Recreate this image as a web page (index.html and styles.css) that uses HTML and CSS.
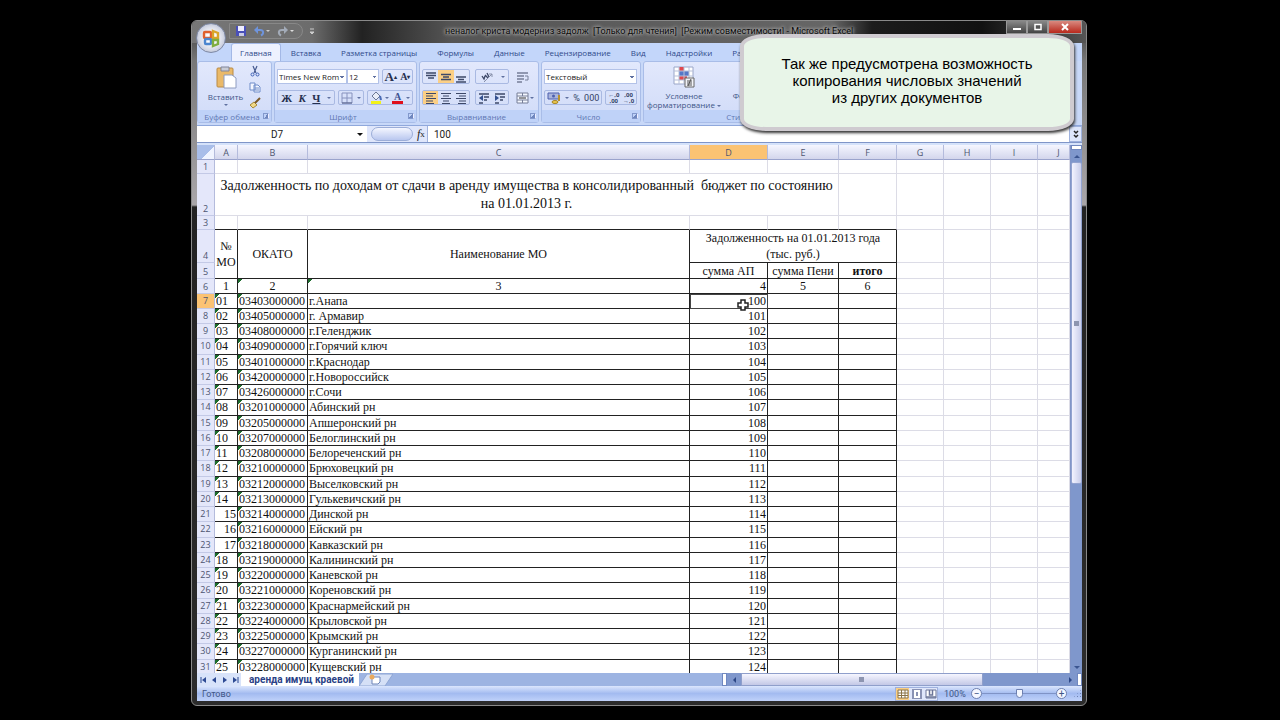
FILE: index.html
```html
<!DOCTYPE html>
<html lang="ru">
  <head>
    <meta charset="UTF-8" />
    <title>Microsoft Excel</title>
    <meta name="viewport" content="width=device-width, initial-scale=1.0" />
    <link rel="stylesheet" href="styles.css">
  </head>
  <body>
    <div class="window">
      <header class="titlebar">
        <button class="orb" aria-label="Office">
          <svg viewBox="0 0 28 28" width="28" height="28">
            <g fill="none" stroke-width="2.4">
              <rect x="7" y="8" width="7" height="6" rx="1" stroke="#e0602c" />
              <path d="M16 7l5 2v5h-5z" stroke="#d9a52a" />
              <rect x="8" y="15" width="6" height="5" rx="1" stroke="#4c86cf" />
              <path d="M16 16h5v4l-5 2z" stroke="#7fae3e" />
            </g>
          </svg>
        </button>
        <div class="quick">
          <button aria-label="Сохранить">
            <svg viewBox="0 0 12 12" width="12" height="12"><path d="M1 1h10v10H1z" fill="#4a50b8" /><path d="M3 1h6v5H3z" fill="#eef" /><path d="M4 8h5v3H4z" fill="#c9cbe8" /></svg>
          </button>
          <button aria-label="Отменить">
            <svg viewBox="0 0 16 12" width="16" height="12"><path d="M3 5h3c4 0 4 4 1 5.500" fill="none" stroke="#6f94dc" stroke-width="2" /><path d="M0 5l4-4v8z" fill="#6f94dc" /><path d="M12 5h4l-2 2z" fill="#ccc" /></svg>
          </button>
          <button aria-label="Вернуть">
            <svg viewBox="0 0 18 12" width="18" height="12"><path d="M8 5H5C1 5 1 9 4 10.500" fill="none" stroke="#a3abb8" stroke-width="2" /><path d="M11 5L7 1v8z" fill="#a3abb8" /><path d="M13 5h4l-2 2z" fill="#ddd" /></svg>
          </button>
        </div>
        <button class="quick-more" aria-label="Настройка панели">
          <svg viewBox="0 0 6 8" width="6" height="8"><path d="M1 1h4M1 4h4L3 6z" stroke="#ccc" fill="#ccc" /></svg>
        </button>
        <div class="caption">неналог криста модерниз задолж&nbsp; [Только для чтения]&nbsp; [Режим совместимости] - Microsoft Excel</div>
        <div class="controls">
          <button aria-label="Свернуть"><svg viewBox="0 0 10 8" width="10" height="8"><path d="M1 5h8v2H1z" fill="#fff" /></svg></button>
          <button aria-label="Развернуть"><svg viewBox="0 0 10 8" width="10" height="8"><path d="M2 1.500h6v5H2z" fill="#555" stroke="#fff" stroke-width="1.500" /></svg></button>
          <button class="close" aria-label="Закрыть"><svg viewBox="0 0 10 8" width="10" height="8"><path d="M2 1l6 6M8 1L2 7" stroke="#fff" stroke-width="2" /></svg></button>
        </div>
      </header>

      <nav class="tabs">
        <button class="active">Главная</button>
        <button>Вставка</button>
        <button>Разметка страницы</button>
        <button>Формулы</button>
        <button>Данные</button>
        <button>Рецензирование</button>
        <button>Вид</button>
        <button>Надстройки</button>
        <button>Разработчик</button>
      </nav>

      <div class="ribbon">
        <section class="group clipboard">
          <div class="group-body">
            <button class="big">
              <svg viewBox="0 0 22 24" width="22" height="24"><rect x="2" y="3" width="16" height="19" rx="1" fill="#eab968" stroke="#b98a45" /><path d="M6 2h8v4H6z" fill="#c9ccd6" stroke="#80859a" /><path d="M9 10h8l4 3v10H9z" fill="#fff" stroke="#8e9cc0" /></svg>
              <span>Вставить</span>
              <i class="arrow"></i>
            </button>
            <div class="stack">
              <button aria-label="Вырезать"><svg viewBox="0 0 12 12" width="12" height="12"><path d="M4 1l3 7M8 1L5 8" stroke="#45598f" stroke-width="1.200" /><circle cx="3.500" cy="9.500" r="1.500" fill="none" stroke="#3f62b8" /><circle cx="8.500" cy="9.500" r="1.500" fill="none" stroke="#3f62b8" /></svg></button>
              <button aria-label="Копировать"><svg viewBox="0 0 12 12" width="12" height="12"><path d="M1 2h5v7H1zM5 4h4l2 2v5H5z" fill="#f4f7ff" stroke="#6e8cc9" /><path d="M6 7h4M6 9h4" stroke="#6e8cc9" /></svg></button>
              <button aria-label="Формат по образцу"><svg viewBox="0 0 12 12" width="12" height="12"><path d="M1 8l4-3 3 3-4 3z" fill="#f0d98a" stroke="#a98a35" /><path d="M6 6l5-5" stroke="#7b5a2a" stroke-width="2" /></svg></button>
            </div>
          </div>
          <h2>Буфер обмена<i class="launcher"></i></h2>
        </section>

        <section class="group font">
          <div class="group-body rows">
            <div class="line">
              <div class="combo">
                <select class="face" aria-label="Шрифт"><option>Times New Rom</option></select>
                <select class="size" aria-label="Размер"><option>12</option></select>
              </div>
              <div class="set grow">
                <button class="serif">A<sup>▴</sup></button>
                <button class="serif small">A<sup>▾</sup></button>
              </div>
            </div>
            <div class="line">
              <div class="set style">
                <button class="serif"><b>Ж</b></button>
                <button class="serif"><b><em>К</em></b></button>
                <button class="serif"><b><u>Ч</u></b></button>
                <i class="arrow"></i>
              </div>
              <div class="set">
                <button aria-label="Границы"><svg viewBox="0 0 12 12" width="12" height="12"><path d="M1 1h10v10H1zM6 1v10M1 6h10" fill="none" stroke="#8792bd" /><path d="M1 11h10" stroke="#555f88" /></svg></button>
                <i class="arrow"></i>
              </div>
              <div class="set grow">
                <button aria-label="Цвет заливки"><svg viewBox="0 0 12 14" width="12" height="14"><path d="M2 5l4-4 4 4-4 4z" fill="#e8edf8" stroke="#6b7896" /><path d="M10 5l1 4" stroke="#4a6bb5" stroke-width="2" /><path d="M1 10h10v3H1z" fill="#f2f21a" /></svg></button>
                <i class="arrow"></i>
                <button class="color-a"><span>A</span></button>
                <i class="arrow"></i>
              </div>
            </div>
          </div>
          <h2>Шрифт<i class="launcher"></i></h2>
        </section>

        <section class="group align">
          <div class="group-body rows">
            <div class="line">
              <div class="set three">
                <button aria-label="По верхнему краю"><svg viewBox="0 0 12 12" width="12" height="12"><path d="M1 2h10M1 4.500h10M3 7h6" stroke="#3d4868" stroke-width="1.300" /></svg></button>
                <button class="on" aria-label="По середине"><svg viewBox="0 0 12 12" width="12" height="12"><path d="M1 3.500h10M3 6h6M1 8.500h10" stroke="#3d4868" stroke-width="1.300" /></svg></button>
                <button aria-label="По нижнему краю"><svg viewBox="0 0 12 12" width="12" height="12"><path d="M1 6h10M3 8.500h6M1 11h10" stroke="#3d4868" stroke-width="1.300" /></svg></button>
              </div>
              <div class="set indent">
                <button aria-label="Ориентация"><svg viewBox="0 0 14 12" width="14" height="12"><path d="M2 5l2 3 1-3M5 4l3 3M7 2l2 4" fill="none" stroke="#3d4868" stroke-width="1.300" /><path d="M4 11l8-8M12 6V3H9" fill="none" stroke="#8790aa" /></svg></button>
                <i class="arrow"></i>
              </div>
              <button class="plain" aria-label="Перенос текста"><svg viewBox="0 0 14 12" width="14" height="12"><path d="M1 2h11M1 5h7M1 8h7M1 11h5" stroke="#767e98" stroke-width="1.300" /><path d="M9 5h3v4H9" fill="none" stroke="#767e98" /></svg></button>
            </div>
            <div class="line">
              <div class="set three">
                <button class="on" aria-label="По левому краю"><svg viewBox="0 0 12 12" width="12" height="12"><path d="M1 1.500h10M1 4h7M1 6.500h10M1 9h7M1 11.500h8" stroke="#3d4868" stroke-width="1.200" /></svg></button>
                <button aria-label="По центру"><svg viewBox="0 0 12 12" width="12" height="12"><path d="M1 1.500h10M3 4h6M1 6.500h10M3 9h6M2 11.500h8" stroke="#3d4868" stroke-width="1.200" /></svg></button>
                <button aria-label="По правому краю"><svg viewBox="0 0 12 12" width="12" height="12"><path d="M1 1.500h10M4 4h7M1 6.500h10M4 9h7M3 11.500h8" stroke="#3d4868" stroke-width="1.200" /></svg></button>
              </div>
              <div class="set indent">
                <button aria-label="Уменьшить отступ"><svg viewBox="0 0 12 12" width="12" height="12"><path d="M1 2h10M6 5h5M6 8h3M1 11h4" stroke="#3d4868" stroke-width="1.500" /><path d="M5 3v6L1 6z" fill="#33508f" /></svg></button>
                <button aria-label="Увеличить отступ"><svg viewBox="0 0 12 12" width="12" height="12"><path d="M1 2h10M6 5h5M6 8h3M1 11h4" stroke="#3d4868" stroke-width="1.500" /><path d="M1 3v6l4-3z" fill="#33508f" /></svg></button>
              </div>
              <button class="plain" aria-label="Объединить"><svg viewBox="0 0 18 12" width="18" height="12"><path d="M1 1h11v10H1zM1 4h11M1 8h11M6.500 1v3M6.500 8v3" fill="#f4f7ff" stroke="#767e98" /><path d="M3 6h7" stroke="#333" /><path d="M14 5h4l-2 2z" fill="#5f70a0" /></svg></button>
            </div>
          </div>
          <h2>Выравнивание<i class="launcher"></i></h2>
        </section>

        <section class="group number">
          <div class="group-body rows">
            <div class="line">
              <select class="format" aria-label="Числовой формат"><option>Текстовый</option></select>
            </div>
            <div class="line">
              <div class="set money">
                <button aria-label="Денежный формат"><svg viewBox="0 0 14 12" width="14" height="12"><path d="M1 1h11v6H1z" fill="#a9b4dc" stroke="#4c5fae" /><circle cx="6.500" cy="4" r="1.500" fill="#4c5fae" /><ellipse cx="8" cy="10" rx="3" ry="1.500" fill="#ecc94e" stroke="#a58324" /><path d="M12 3v6" stroke="#b8922e" stroke-width="2" /></svg></button>
                <i class="arrow"></i>
                <button>%</button>
                <button>000</button>
              </div>
              <div class="set decimals">
                <button>←,0<br>,00</button>
                <button>,00<br>→,0</button>
              </div>
            </div>
          </div>
          <h2>Число<i class="launcher"></i></h2>
        </section>

        <section class="group styles">
          <div class="group-body">
            <button class="big">
              <svg viewBox="0 0 22 24" width="22" height="24"><path d="M1 2h19v17H1z" fill="#fff" stroke="#9aa6c8" /><path d="M6 2h5v4H6zM6 11h5v4H6z" fill="#e0474c" /><path d="M6 6h10v5H6z" fill="#5577c8" /><path d="M11 11h3v4h-3z" fill="#e0474c" /><path d="M1 6h19M1 11h19M1 15h19M6 2v17M11 2v17M16 2v17" stroke="#b6bfd9" /><path d="M12 13h9v9h-9z" fill="#f2f3f8" stroke="#666" /><path d="M14 16h5M14 18h5M14 20h5M18 14l-3 7" stroke="#555" /></svg>
              <span>Условное<br>форматирование <i class="arrow"></i></span>
            </button>
            <button class="big">
              <svg viewBox="0 0 22 24" width="22" height="24"><path d="M1 2h19v17H1zM1 8h19M1 13h19M7 2v17M14 2v17" fill="#dfe8fb" stroke="#6f8cc8" /></svg>
              <span>Форматировать<br>как таблицу</span>
            </button>
          </div>
          <h2>Стили</h2>
        </section>
      </div>

      <div class="formula">
        <div class="namebox">
          <input type="text" value="D7" aria-label="Имя ячейки" />
          <i class="arrow"></i>
        </div>
        <div class="fx"><span class="pill"></span><button><em>f</em>x</button></div>
        <input class="value" type="text" value="100" aria-label="Строка формул" />
        <button class="expand" aria-label="Развернуть строку формул"><svg viewBox="0 0 8 10" width="8" height="10"><path d="M2 2l2 2 2-2M2 6l2 2 2-2" fill="none" stroke="#222" stroke-width="1.500" /></svg></button>
      </div>

      <main class="work">
        <div class="sheet">
          <table>
            <colgroup>
              <col class="c-num"><col class="c-a"><col class="c-b"><col class="c-c"><col class="c-d"><col class="c-e"><col class="c-f"><col class="c-g"><col class="c-g"><col class="c-g"><col>
            </colgroup>
            <thead>
              <tr>
                <th class="corner"></th><th>A</th><th>B</th><th>C</th><th class="current">D</th><th>E</th><th>F</th><th>G</th><th>H</th><th>I</th><th class="last">J</th>
              </tr>
            </thead>
            <tbody id="rows">
              <tr class="r1"><th>1</th><td></td><td></td><td></td><td></td><td></td><td></td><td></td><td></td><td></td><td></td></tr>
              <tr class="r2"><th>2</th><td colspan="5" class="title">Задолженность по доходам от сдачи в аренду имущества в консолидированный&nbsp; бюджет по состоянию<br>на 01.01.2013 г.</td><td></td><td></td><td></td><td></td><td></td></tr>
              <tr class="r3"><th>3</th><td class="under"></td><td class="under"></td><td class="under"></td><td class="under"></td><td class="under"></td><td class="under"></td><td></td><td></td><td></td><td></td></tr>
              <tr class="r4"><th>4</th><td rowspan="2" class="box mid tall">№ МО</td><td rowspan="2" class="box mid">ОКАТО</td><td rowspan="2" class="box mid">Наименование МО</td><td colspan="3" class="box mid tall">Задолженность на 01.01.2013 года<br>(тыс. руб.)</td><td></td><td></td><td></td><td></td></tr>
              <tr class="r5"><th>5</th><td class="box mid">сумма АП</td><td class="box mid">сумма Пени</td><td class="box mid"><b>итого</b></td><td></td><td></td><td></td><td></td></tr>
              <tr><th>6</th><td class="box mid">1</td><td class="box mid mark">2</td><td class="box mid mark">3</td><td class="box num">4</td><td class="box mid">5</td><td class="box mid">6</td><td></td><td></td><td></td><td></td></tr>
            </tbody>
          </table>
        </div>
        <div class="vscroll">
          <span class="split"></span>
          <button class="up" aria-label="Вверх"></button>
          <span class="thumb"></span>
          <button class="down" aria-label="Вниз"></button>
        </div>
      </main>

      <div class="bottom">
        <div class="sheet-tabs">
          <button aria-label="Первый лист"><svg viewBox="0 0 8 8" width="8" height="8"><path d="M2 1v6" stroke="#2d4a94" /><path d="M7 1v6L3 4z" fill="#2d4a94" /></svg></button>
          <button aria-label="Предыдущий лист"><svg viewBox="0 0 8 8" width="8" height="8"><path d="M6 1v6L2 4z" fill="#2d4a94" /></svg></button>
          <button aria-label="Следующий лист"><svg viewBox="0 0 8 8" width="8" height="8"><path d="M2 1v6l4-3z" fill="#2d4a94" /></svg></button>
          <button aria-label="Последний лист"><svg viewBox="0 0 8 8" width="8" height="8"><path d="M1 1v6l4-3z" fill="#2d4a94" /><path d="M6 1v6" stroke="#2d4a94" /></svg></button>
          <button class="name">аренда имущ краевой</button>
          <button class="new" aria-label="Вставить лист"><svg viewBox="0 0 34 13" width="34" height="13"><path d="M0 13L8 1h26l-8 12z" fill="#d5e0f6" stroke="#8ea6d4" /><path d="M13 4h8v5l-2 2h-6z" fill="#fff" stroke="#6c84b8" /><circle cx="13" cy="4" r="2.500" fill="#e9a95c" /></svg></button>
        </div>
        <div class="hscroll">
          <span class="grip"></span>
          <button class="left" aria-label="Влево"></button>
          <span class="track"><span class="thumb"></span></span>
          <button class="right" aria-label="Вправо"></button>
          <span class="grip"></span>
        </div>
      </div>

      <footer class="status">
        <span class="ready">Готово</span>
        <div class="views">
          <button class="on" aria-label="Обычный"><svg viewBox="0 0 12 10" width="12" height="10"><path d="M1 1h10v8H1zM1 4h10M1 6.500h10M4.500 1v8M8 1v8" fill="#fff" stroke="#8a7448" /></svg></button>
          <button aria-label="Разметка страницы"><svg viewBox="0 0 12 10" width="12" height="10"><path d="M1 0h10v10H1z" fill="#8992b4" /><path d="M3 1h6v8H3z" fill="#fff" /><path d="M5 3h2v4H5z" fill="#8992b4" /></svg></button>
          <button aria-label="Страничный режим"><svg viewBox="0 0 12 10" width="12" height="10"><path d="M1 1h10v8H1z" fill="#fff" stroke="#6b7598" /><path d="M4.500 1v5h3V1M1 8h10" fill="none" stroke="#6b7598" stroke-width="1.500" /></svg></button>
        </div>
        <label for="zoom">100%</label>
        <button class="round" aria-label="Уменьшить">−</button>
        <input type="range" id="zoom" min="0" max="100" value="50" />
        <button class="round" aria-label="Увеличить">+</button>
        <span class="resize"></span>
      </footer>

      <aside class="note">Так же предусмотрена возможность<br>копирования числовых значений<br>из других документов</aside>
    </div>

    <script>
      const places = [
        ["01", "03403000000", "г.Анапа"],
        ["02", "03405000000", "г. Армавир"],
        ["03", "03408000000", "г.Геленджик"],
        ["04", "03409000000", "г.Горячий ключ"],
        ["05", "03401000000", "г.Краснодар"],
        ["06", "03420000000", "г.Новороссийск"],
        ["07", "03426000000", "г.Сочи"],
        ["08", "03201000000", "Абинский рн"],
        ["09", "03205000000", "Апшеронский рн"],
        ["10", "03207000000", "Белоглинский рн"],
        ["11", "03208000000", "Белореченский рн"],
        ["12", "03210000000", "Брюховецкий рн"],
        ["13", "03212000000", "Выселковский рн"],
        ["14", "03213000000", "Гулькевичский рн"],
        [15, "03214000000", "Динской рн"],
        [16, "03216000000", "Ейский рн"],
        [17, "03218000000", "Кавказский рн"],
        ["18", "03219000000", "Калининский рн"],
        ["19", "03220000000", "Каневской рн"],
        ["20", "03221000000", "Кореновский рн"],
        ["21", "03223000000", "Краснармейский рн"],
        ["22", "03224000000", "Крыловской рн"],
        ["23", "03225000000", "Крымский рн"],
        ["24", "03227000000", "Курганинский рн"],
        ["25", "03228000000", "Кущевский рн"],
      ];

      const cursor = `<svg class="cursor" viewBox="0 0 12 12" width="12" height="12">
        <path d="M4 1h4v3h3v4H8v3H4V8H1V4h3z" fill="#fff" stroke="#222" stroke-width="1.500" /></svg>`;

      let html = "";
      places.forEach(([no, code, name], i) => {
        // номера, введённые числом, прижаты вправо
        const kind = typeof no === "number" ? "num" : "mark";
        const first = i === 0;
        html += `<tr class="data">
          <th class="${first ? "current" : ""}">${i + 7}</th>
          <td class="box ${kind}">${no}</td>
          <td class="box mark">${code}</td>
          <td class="box">${name}</td>
          <td class="box num ${first ? "selected" : ""}">${first ? cursor : ""}${100 + i}</td>
          <td class="box"></td><td class="box"></td>
          <td></td><td></td><td></td><td></td></tr>`;
      });
      document.getElementById("rows").insertAdjacentHTML("beforeend", html);
    </script>
  </body>
</html>
```
FILE: styles.css
```css
* {
  box-sizing: border-box;
}

body {
  margin: 0;
  height: 100vh;
  padding: 20px 193px 14px 191px;
  background: #000;
  font-family: Roboto, "Noto Sans", sans-serif;
  font-size: 9px;
  color: #3f5687;
}

button,
input,
select {
  margin: 0;
  padding: 0;
  border: 0;
  background: none;
  font: inherit;
  color: inherit;
  appearance: none;
}

button {
  display: flex;
  align-items: center;
  justify-content: center;
  white-space: nowrap;
}

svg {
  display: block;
  flex: none;
}

.window {
  position: relative;
  display: flex;
  flex-direction: column;
  height: 100%;
  padding: 0 4px 4px 5px;
  border: 1px solid #8a8a8a;
  border-radius: 6px;
  background: linear-gradient(#3a3a3a, #777 40px, #a9a6a9 184px, #222 186px, #2c2c2c);
}

/* title bar */
.titlebar {
  display: flex;
  height: 22px;
  margin: 0 -4px 0 -5px;
  padding-left: 4px;
  border-radius: 5px 5px 0 0;
  background: linear-gradient(90deg, #777 0, #6c6c6c 120px, #222 170px, #555 260px, #666 640px, #1c1c1c 680px, #111 790px, #555 100%);
}

.orb {
  position: relative;
  z-index: 2;
  width: 30px;
  height: 30px;
  margin-top: 2px;
  border: 1px solid #7d88a4;
  border-radius: 50%;
  background: radial-gradient(#fff 20%, #d5d9e6 60%, #9aa4bd);
}

.quick {
  display: flex;
  align-items: center;
  gap: 7px;
  width: 74px;
  height: 16px;
  margin: 2px 6px 0 3px;
  padding-left: 5px;
  border: 1px solid #888;
  border-radius: 0 9px 9px 0;
  background: #707070;
}

.caption {
  flex: 1;
  padding-left: 130px;
  line-height: 20px;
  color: #0a0a0a;
  white-space: nowrap;
  text-shadow: 0 0 3px #bbb, 0 0 4px #aaa, 0 0 4px #999;
}

.controls {
  display: flex;
  height: 13px;
  margin-right: 4px;
}

.controls button {
  width: 21px;
  border: 1px solid #999;
  border-top: 0;
  background: linear-gradient(#888, #444);
}

.controls .close {
  width: 34px;
  background: linear-gradient(#d98a80, #b8281c);
}

/* ribbon */
.tabs,
.ribbon {
  font-family: "Open Sans", "Noto Sans", sans-serif;
  font-size: 8px;
}

.tabs {
  display: flex;
  height: 18px;
  padding-left: 34px;
  background: #c3d6fa;
}

.tabs button {
  padding: 0 10px;
  color: #2f4a8a;
}

.tabs .active {
  border: 1px solid #a3b8e6;
  border-bottom: 0;
  border-radius: 3px 3px 0 0;
  padding: 0 8px;
  background: #eef1fe;
}

.ribbon {
  display: flex;
  gap: 2px;
  height: 65px;
  padding-bottom: 2px;
  overflow: hidden;
  border-bottom: 1px solid #8fa8dc;
  background: #c8d8f8;
}

.group {
  display: flex;
  flex: none;
  flex-direction: column;
  border: 1px solid #a9bde8;
  border-radius: 3px;
  background: linear-gradient(#e2e8fc, #d0dbf8);
}

.group h2 {
  display: flex;
  flex: none;
  align-items: center;
  justify-content: center;
  height: 12px;
  margin: 0;
  background: #bfd2f8;
  font-size: 8px;
  font-weight: normal;
  white-space: nowrap;
  color: #5f78b4;
}

.group-body {
  display: flex;
  flex: 1;
  min-height: 0;
}

.rows {
  flex-direction: column;
  gap: 6px;
  padding: 7px 3px 0 2px;
}

.clipboard {
  width: 75px;
}

.font {
  width: 143px;
}

.align {
  width: 120px;
}

.number {
  width: 100px;
}

.styles {
  width: 190px;
}

.launcher {
  width: 6px;
  height: 6px;
  margin-left: auto;
  margin-right: 2px;
  border: 1px solid #8298cc;
  border-right-color: #eef;
  background: linear-gradient(135deg, transparent 50%, #6f86bd 50%);
}

.group h2:has(.launcher)::before {
  content: "";
  width: 3px;
  margin-right: auto;
}

.arrow {
  display: inline-block;
  flex: none;
  border: 2px solid transparent;
  border-top-color: #5f70a0;
  border-bottom: 0;
}

.big {
  flex-direction: column;
  justify-content: flex-start;
  padding: 3px 3px 0;
  line-height: 9px;
}

.clipboard .big {
  width: 50px;
  padding-left: 8px;
  gap: 3px;
}

.styles .big {
  width: 80px;
  gap: 2px;
}

.big .arrow {
  vertical-align: middle;
}

.stack {
  display: flex;
  flex-direction: column;
  gap: 4px;
  padding: 3px 0 0 1px;
}

.line {
  display: flex;
  gap: 3px;
  height: 15px;
}

.set {
  display: flex;
  align-items: center;
  justify-content: space-around;
  border: 1px solid #a9b9e2;
  border-radius: 2px;
  width: 26px;
}

.set button {
  height: 13px;
}

.set.style {
  width: 58px;
}

.set.three {
  width: 48px;
}

.three button {
  width: 16px;
}

.set.indent {
  width: 34px;
  margin-left: 2px;
}

.set.money {
  width: 59px;
  font-family: Roboto, sans-serif;
  font-size: 9px;
  color: #333f66;
}

.set.decimals {
  width: 32px;
  font-size: 6px;
  line-height: 6px;
  font-weight: bold;
  color: #333f66;
}

.set.grow {
  flex: 1;
}

.on {
  background: #fbcf85;
}

.plain {
  padding-left: 4px;
}

.serif {
  font-family: "Liberation Serif", serif;
  font-size: 11px;
  color: #26304f;
}

.grow > .serif {
  font-size: 13px;
  font-weight: bold;
}

.grow > .small {
  font-size: 10px;
}

.serif sup {
  font-size: 6px;
  line-height: 6px;
}

.color-a span {
  border-bottom: 3px solid #e0101c;
  padding: 0 2px;
  font: bold 10px/9px "Liberation Serif", serif;
  color: #3f5390;
}

.combo {
  display: flex;
}

select {
  padding-left: 1px;
  border: 1px solid #b3c2e8;
  color: #222;
}

/* drop-down mark of the ribbon lists */
.combo select,
.format {
  background: conic-gradient(from -45deg at 50% 100%, #5f70a0 90deg, transparent 0) no-repeat right 2px center / 4px 2px, #fff;
}

.face {
  width: 70px;
}

.size {
  width: 32px;
}

.format {
  width: 93px;
}

/* formula bar */
.formula {
  display: flex;
  height: 17px;
  border-bottom: 1px solid #7f95c8;
  background: #fff;
  font-size: 10px;
  color: #222;
}

.namebox {
  display: flex;
  align-items: center;
  width: 170px;
}

.namebox input {
  flex: 1;
  min-width: 0;
  text-align: center;
}

.namebox .arrow {
  margin-right: 4px;
  border-width: 3px;
  border-bottom: 0;
  border-top-color: #111;
}

.fx {
  display: flex;
  width: 61px;
  border-right: 1px solid #9fb2de;
  background: #dfe6fb;
}

.pill {
  width: 42px;
  height: 14px;
  margin: 1px 4px;
  border: 1px solid #9badd8;
  border-radius: 8px;
  background: linear-gradient(#f4f6ff, #b9c7ef);
}

.fx button {
  font: 9px "Liberation Serif", serif;
}

.fx em {
  font-size: 12px;
}

.value {
  flex: 1;
  min-width: 0;
  padding-left: 6px;
}

.expand {
  width: 13px;
  border: 1px solid #9fb2de;
  background: #dde6fb;
}

/* sheet */
.work {
  display: flex;
  flex: 1;
  min-height: 0;
  border-top: 2px solid #d5e2fa;
  background: #fff;
}

.sheet {
  flex: 1;
  min-width: 0;
  overflow: hidden;
}

table {
  width: 100%;
  border-collapse: separate;
  border-spacing: 0;
  table-layout: fixed;
  background: #fff;
}

.c-num {
  width: 18px;
}

.c-a {
  width: 23px;
}

.c-b {
  width: 70px;
}

.c-c {
  width: 382px;
}

.c-d {
  width: 78px;
}

.c-e {
  width: 71px;
}

.c-f {
  width: 58px;
}

.c-g {
  width: 47px;
}

th {
  padding: 0;
  border-right: 1px solid #b4bbdc;
  border-bottom: 1px solid #c3c9e6;
  background: #e4e7fa;
  font: 9px/13px "Open Sans", "Noto Sans", sans-serif;
  vertical-align: bottom;
  color: #4d5570;
}

thead th {
  height: 15px;
  border-bottom-color: #9aa3cc;
  background: linear-gradient(#f5f6ff, #d3d6ec);
}

thead .corner {
  background: linear-gradient(135deg, #a9bee9 60%, #f0f4ff 60%);
}

thead .last {
  padding-left: 10px;
}

th.current {
  background: #fbc373;
}

.data th {
  vertical-align: top;
}

td {
  height: 15px;
  padding: 0 1px;
  border-right: 1px solid #dcdce6;
  border-bottom: 1px solid #dcdce6;
  font: 12px/14px "Liberation Serif", serif;
  color: #111;
  white-space: nowrap;
}

.data td {
  line-height: 13px;
}

tr:nth-child(4n + 10) td {
  height: 16px;
}

.r1 td {
  height: 14px;
  line-height: 13px;
}

.r2 td {
  height: 42px;
}

.r3 td {
  height: 14px;
  line-height: 13px;
}

.r4 td {
  height: 33px;
}

.r5 td {
  height: 16px;
}

td.title {
  font-size: 14px;
  line-height: 18px;
  text-align: center;
}

td.under {
  border-bottom-color: #222;
}

td.box {
  border-color: #222;
}

td.mid {
  text-align: center;
}

td.tall {
  line-height: 16px;
  white-space: normal;
}

td.num {
  text-align: right;
}

td.mark {
  background: linear-gradient(135deg, #1c6b2c 3px, transparent 3px);
}

td.selected {
  position: relative;
  outline: 1px solid #444;
  outline-offset: -1px;
}

.cursor {
  position: absolute;
  right: 18px;
  top: 5px;
}

.vscroll {
  display: flex;
  flex-direction: column;
  width: 12px;
  border-left: 1px solid #8195c8;
  background: #7f97cc;
}

.split {
  height: 5px;
  border: 1px solid #7088c0;
  background: #fff;
}

.vscroll button {
  height: 12px;
}

.vscroll button::before,
.hscroll button::before {
  content: "";
  border: 3px solid transparent;
}

.vscroll .up::before {
  border-bottom-color: #3b5590;
  border-top: 0;
}

.vscroll .down::before {
  border-top-color: #3b5590;
  border-bottom: 0;
}

.vscroll .down {
  margin-top: auto;
}

.vscroll .thumb {
  height: 61%;
  border: 1px solid #93a3d0;
  border-radius: 2px;
  background: linear-gradient(#8d95b0, #8d95b0) no-repeat center / 5px 5px, linear-gradient(90deg, #f3f3ff, #c8cdea);
}

/* sheet tabs and horizontal scroll */
.bottom {
  display: flex;
  height: 13px;
  background: #9db4e2;
}

.sheet-tabs {
  display: flex;
  flex: 1;
}

.sheet-tabs button {
  width: 11px;
  background: #d8e3fa;
}

.sheet-tabs .name {
  width: auto;
  padding: 0 5px 0 8px;
  background: #fff;
  font-size: 10px;
  font-weight: bold;
  color: #2a4186;
}

.sheet-tabs .new {
  width: 34px;
  background: none;
}

.hscroll {
  display: flex;
  width: 360px;
  background: #7f97cc;
}

.grip {
  width: 5px;
  border: 1px solid #7088c0;
  background: #fff;
}

.hscroll button {
  width: 14px;
}

.hscroll .left::before {
  border-right-color: #2c4786;
  border-left: 0;
}

.hscroll .right::before {
  border-left-color: #2c4786;
  border-right: 0;
}

.track {
  display: flex;
  flex: 1;
}

.track .thumb {
  width: 75%;
  border: 1px solid #8f9fcb;
  background: linear-gradient(#8d95b0, #8d95b0) no-repeat center / 5px 5px, linear-gradient(#f6f6ff, #c3c8e6);
}

/* status bar */
.status {
  display: flex;
  align-items: center;
  height: 15px;
  background: linear-gradient(#dbe6fd, #a3bbf0 50%, #c0d2fa);
}

.ready {
  flex: 1;
  padding-left: 5px;
}

.views {
  display: flex;
  gap: 1px;
  margin-right: 6px;
  border: 1px solid #9fb1de;
  background: #dfe6fa;
}

.views button {
  width: 13px;
  height: 12px;
}

.status label {
  width: 27px;
}

.round {
  width: 11px;
  height: 11px;
  border: 1px solid #6c7fb0;
  border-radius: 50%;
  background: #f4f7ff;
  font-size: 10px;
  line-height: 8px;
}

#zoom {
  width: 74px;
  height: 11px;
  background: linear-gradient(#7f93c6, #7f93c6) no-repeat center / 100% 1px;
}

#zoom::-webkit-slider-thumb {
  appearance: none;
  width: 7px;
  height: 9px;
  border: 1px solid #6c7fb0;
  border-radius: 0 0 4px 4px;
  background: #f4f7ff;
}

.resize {
  width: 9px;
  height: 9px;
  margin-left: 6px;
  background: radial-gradient(#6c7fb0 1px, transparent 1px) 0 0 / 3px 3px;
  clip-path: polygon(100% 0, 100% 100%, 0 100%);
}

/* callout over the window */
.note {
  position: absolute;
  z-index: 3;
  top: 13px;
  right: 12px;
  width: 334px;
  height: 97px;
  padding: 17px 0 0;
  border: 4px solid #cfcbd0;
  border-radius: 26px 26px 26px 26px / 12px;
  background: #e8f5e8;
  box-shadow: 1px 2px 3px #333;
  font: 15px/17px "Liberation Sans", sans-serif;
  text-align: center;
  color: #000;
}
```
